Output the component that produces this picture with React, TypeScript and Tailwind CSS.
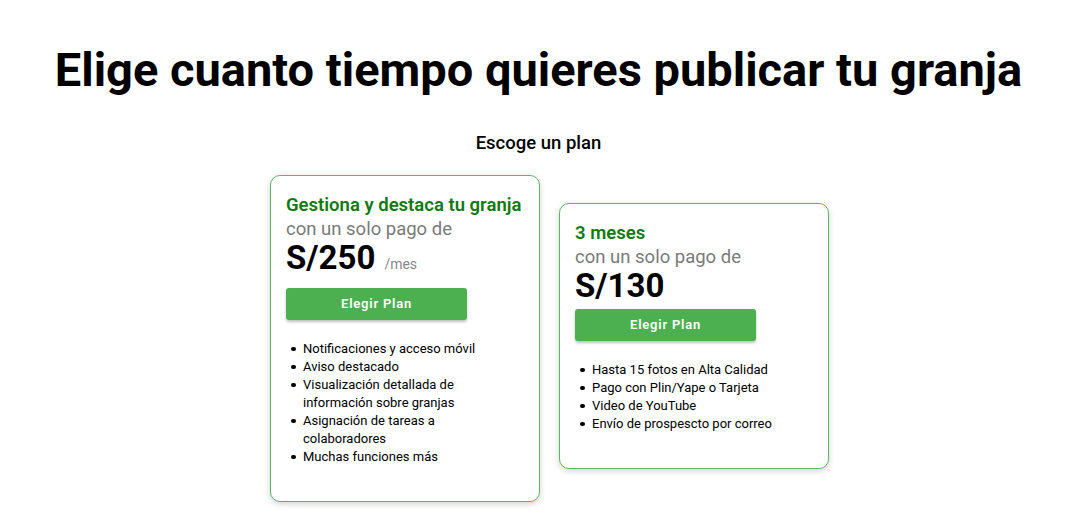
import React from 'react';

type Plan = {
  title: string;
  price: string;
  unit?: string;
  features: string[];
};

const PLANS: Plan[] = [
  {
    title: 'Gestiona y destaca tu granja',
    price: 'S/250',
    unit: '/mes',
    features: [
      'Notificaciones y acceso móvil',
      'Aviso destacado',
      'Visualización detallada de información sobre granjas',
      'Asignación de tareas a colaboradores',
      'Muchas funciones más',
    ],
  },
  {
    title: '3 meses',
    price: 'S/130',
    features: [
      'Hasta 15 fotos en Alta Calidad',
      'Pago con Plin/Yape o Tarjeta',
      'Video de YouTube',
      'Envío de prospescto por correo',
    ],
  },
];

const PlanCard: React.FC<{ plan: Plan; className?: string }> = ({ plan, className }) => (
  <div
    className={
      'w-[270px] rounded-[10px] border border-[#5cb85c] bg-white px-[15px] pt-[17px] pb-[35px] shadow-[0_2px_6px_rgba(0,0,0,0.18)] ' +
      (className ?? '')
    }
  >
    <h3 className="text-[18.5px] font-semibold leading-[24px] text-[#0f7a0f]">{plan.title}</h3>
    <p className="text-[18.5px] leading-[24px] text-[#7a7a7a]">con un solo pago de</p>
    <div className="flex items-baseline gap-[9px]">
      <span className="text-[33px] font-bold leading-[34px] text-black">{plan.price}</span>
      {plan.unit && <span className="text-[14px] text-[#888]">{plan.unit}</span>}
    </div>
    <button
      className={
        (plan.unit ? 'mt-[13px] ' : 'mt-[6px] ') +
        'h-[32px] w-[181px] rounded-[3px] bg-[#4caf50] text-[13px] font-semibold tracking-[0.06em] text-white shadow-[0_2px_3px_rgba(0,0,0,0.25)]'
      }
    >
      Elegir Plan
    </button>
    <ul className="mt-[20px] pr-[22px] text-[13px] leading-[18px] text-black">
      {plan.features.map((f) => (
        <li key={f} className="flex">
          <span className="flex h-[18px] w-[17px] shrink-0 items-center pl-[5px]">
            <span className="h-[4.5px] w-[4.5px] rounded-full bg-black" />
          </span>
          <span>{f}</span>
        </li>
      ))}
    </ul>
  </div>
);

export default function App() {
  return (
    <div className="min-h-screen bg-white font-['Roboto',sans-serif] text-black">
      <h1 className="pt-[42px] text-center text-[47px] font-bold leading-[56px]">
        Elige cuanto tiempo quieres publicar tu granja
      </h1>
      <p className="mt-[33px] text-center text-[18.5px] font-medium leading-[24px]">Escoge un plan</p>
      <div className="mt-[20px] flex items-start justify-center gap-[19px] pl-[22px]">
        <PlanCard plan={PLANS[0]} />
        <PlanCard plan={PLANS[1]} className="mt-[28px]" />
      </div>
    </div>
  );
}
